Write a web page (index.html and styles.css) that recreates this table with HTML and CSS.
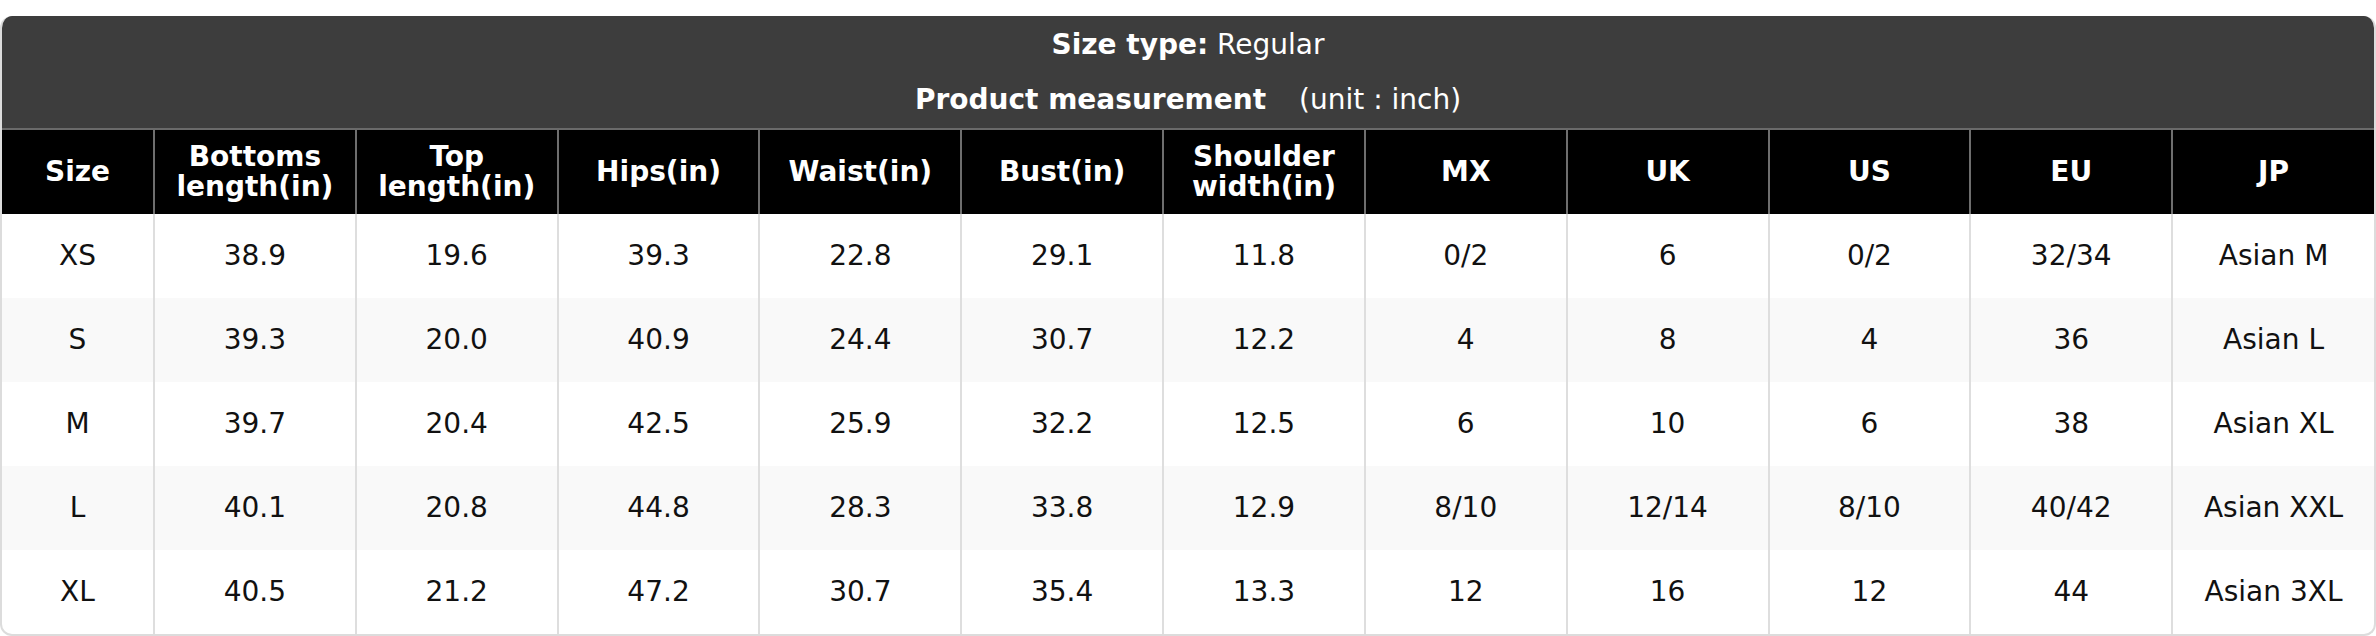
FILE: index.html
```html
<!DOCTYPE html>
<html lang="en">
<head>
<meta charset="utf-8">
<title>Size chart</title>
<link rel="stylesheet" href="styles.css">
</head>
<body>
<div class="card">
  <div class="card-head">
    <div class="head-line"><b>Size type:</b> Regular</div>
    <div class="head-line"><b>Product measurement</b><span class="unit">(unit : inch)</span></div>
  </div>
  <table class="chart">
    <colgroup>
      <col class="col-size">
      <col><col><col><col><col><col><col><col><col><col><col>
    </colgroup>
    <thead>
      <tr>
        <th>Size</th>
        <th>Bottoms<br>length(in)</th>
        <th>Top<br>length(in)</th>
        <th>Hips(in)</th>
        <th>Waist(in)</th>
        <th>Bust(in)</th>
        <th>Shoulder<br>width(in)</th>
        <th>MX</th>
        <th>UK</th>
        <th>US</th>
        <th>EU</th>
        <th>JP</th>
      </tr>
    </thead>
    <tbody>
      <tr><td>XS</td><td>38.9</td><td>19.6</td><td>39.3</td><td>22.8</td><td>29.1</td><td>11.8</td><td>0/2</td><td>6</td><td>0/2</td><td>32/34</td><td>Asian M</td></tr>
      <tr><td>S</td><td>39.3</td><td>20.0</td><td>40.9</td><td>24.4</td><td>30.7</td><td>12.2</td><td>4</td><td>8</td><td>4</td><td>36</td><td>Asian L</td></tr>
      <tr><td>M</td><td>39.7</td><td>20.4</td><td>42.5</td><td>25.9</td><td>32.2</td><td>12.5</td><td>6</td><td>10</td><td>6</td><td>38</td><td>Asian XL</td></tr>
      <tr><td>L</td><td>40.1</td><td>20.8</td><td>44.8</td><td>28.3</td><td>33.8</td><td>12.9</td><td>8/10</td><td>12/14</td><td>8/10</td><td>40/42</td><td>Asian XXL</td></tr>
      <tr><td>XL</td><td>40.5</td><td>21.2</td><td>47.2</td><td>30.7</td><td>35.4</td><td>13.3</td><td>12</td><td>16</td><td>12</td><td>44</td><td>Asian 3XL</td></tr>
    </tbody>
  </table>
</div>
</body>
</html>
```
FILE: styles.css
```css
html, body {
  margin: 0;
  padding: 0;
  background: #ffffff;
}

body {
  font-family: "DejaVu Sans", Verdana, sans-serif;
  padding-top: 16px;
}

.card {
  border: 2px solid #dcdcdc;
  border-top: 0;
  border-radius: 12px;
  overflow: hidden;
  background: #ffffff;
}

.card-head {
  background: #3d3d3d;
  color: #ffffff;
  text-align: center;
  font-size: 28px;
  padding: 1px 0;
  border-bottom: 2px solid #6a6a6a;
}

.head-line {
  line-height: 55px;
  height: 55px;
  white-space: nowrap;
}

.head-line b {
  font-weight: bold;
}

.unit {
  margin-left: 33px;
}

.chart {
  width: 100%;
  border-collapse: collapse;
  table-layout: fixed;
  font-size: 28px;
}

.col-size {
  width: 152px;
}

.chart th {
  background: #000000;
  color: #ffffff;
  font-weight: bold;
  height: 84px;
  padding: 0 4px;
  line-height: 30px;
  text-align: center;
  vertical-align: middle;
  border-left: 2px solid #6e6e6e;
}

.chart th:first-child {
  border-left: 0;
}

.chart td {
  height: 84px;
  padding: 0 4px;
  line-height: 32px;
  text-align: center;
  vertical-align: middle;
  color: #111111;
  border-left: 2px solid #dedede;
}

.chart td:first-child {
  border-left: 0;
}

.chart tbody tr:nth-child(even) td {
  background: #f9f9f9;
}
```
